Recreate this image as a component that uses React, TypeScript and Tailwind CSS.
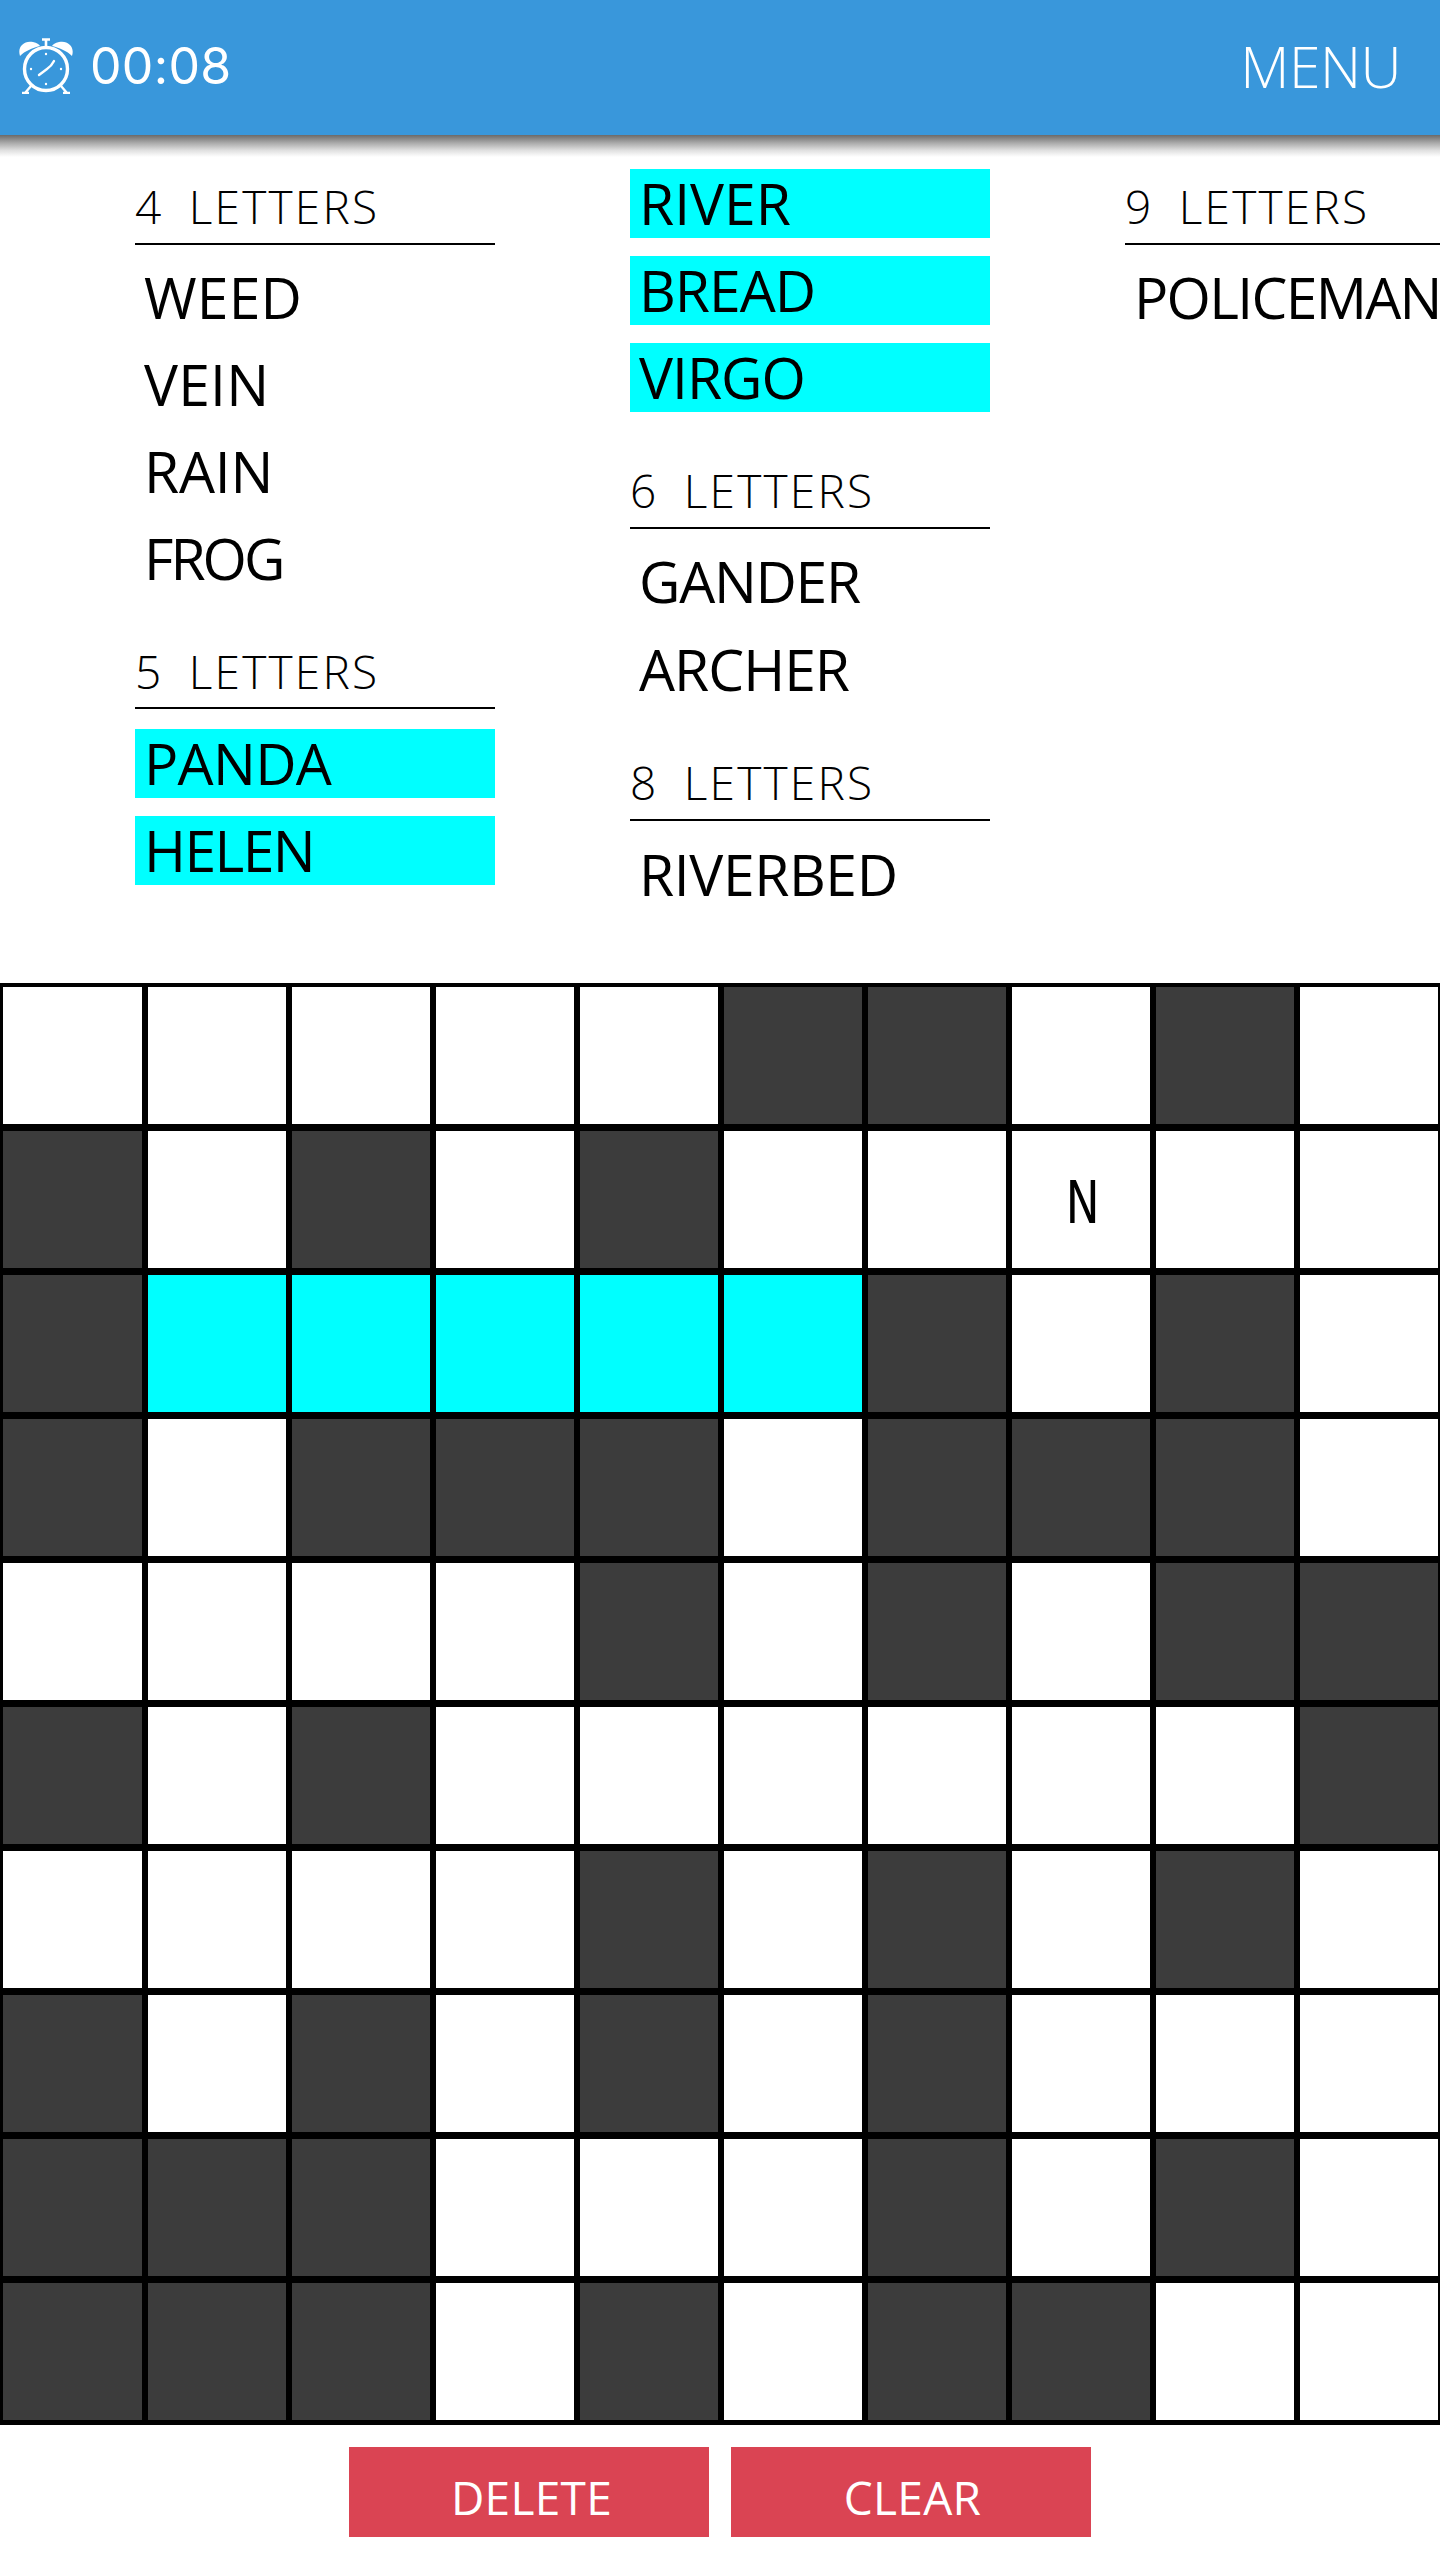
const D = "D", W = "W", C = "C", N = "N";
const rows = [
  [W, W, W, W, W, D, D, W, D, W],
  [D, W, D, W, D, W, W, N, W, W],
  [D, C, C, C, C, C, D, W, D, W],
  [D, W, D, D, D, W, D, D, D, W],
  [W, W, W, W, D, W, D, W, D, D],
  [D, W, D, W, W, W, W, W, W, D],
  [W, W, W, W, D, W, D, W, D, W],
  [D, W, D, W, D, W, D, W, W, W],
  [D, D, D, W, W, W, D, W, D, W],
  [D, D, D, W, D, W, D, D, W, W],
];

function Heading({ n, tall, low }: { n: number; tall?: boolean; low?: boolean }) {
  return (
    <div className={(tall ? "h-[99px]" : "h-[98px]") + " mb-[18px] flex items-end border-b-2 border-black"}>
      <span className={"font-['Open_Sans',sans-serif] font-light text-[46px] leading-[46px] text-black tracking-[2.2px] [word-spacing:-1.5px] whitespace-pre " + (low ? "mb-[13px]" : "mb-[14px]")}>
        {n}  LETTERS
      </span>
    </div>
  );
}

function Word({ text, hit, ls = "tracking-[-1px]" }: { text: string; hit?: boolean; ls?: string }) {
  return (
    <div className={"h-[69px] mb-[18px] pl-[9px] flex items-center whitespace-nowrap font-['Open_Sans',sans-serif] text-[57px] leading-none text-black " + ls + (hit ? " bg-[#00ffff]" : "")}>
      {text}
    </div>
  );
}

function Alarm() {
  return (
    <svg width="56" height="56" viewBox="0 0 56 56" className="text-white mb-[4px]" fill="none" stroke="currentColor">
      <circle cx="28" cy="31" r="21.5" strokeWidth="3.4" />
      <path d="M2 18 C-1 9 6 2 15 4 C19 5 21 6 22 8 C14 10 7 13 2 18 Z" fill="currentColor" stroke="none" />
      <path d="M54 18 C57 9 50 2 41 4 C37 5 35 6 34 8 C42 10 49 13 54 18 Z" fill="currentColor" stroke="none" />
      <path d="M28 8 V2 M24 1.5 H32" strokeWidth="2.6" />
      <path d="M13 48 L7 55 M43 48 L49 55 M4 55 H11 M45 55 H52" strokeWidth="2.4" />
      <path d="M21 37 L29 31 C32 29 34 27 36 23" strokeWidth="2.4" strokeLinecap="round" />
      <circle cx="28" cy="16" r="1.2" fill="currentColor" stroke="none" />
      <circle cx="28" cy="46" r="1.2" fill="currentColor" stroke="none" />
      <circle cx="13" cy="31" r="1.2" fill="currentColor" stroke="none" />
      <circle cx="43" cy="31" r="1.2" fill="currentColor" stroke="none" />
    </svg>
  );
}

export default function App() {
  return (
    <div className="relative w-[1440px] h-[2560px] bg-white overflow-hidden">
      <header className="relative h-[135px] bg-[#3997db] flex items-center justify-between pl-[18px] pr-[39px]">
        <div className="flex items-center gap-[16px]">
          <Alarm />
          <span className="font-['Inter',sans-serif] font-normal text-[50px] leading-none text-white tracking-[0.3px] mb-[3px]">00:08</span>
        </div>
        <span className="font-['Open_Sans',sans-serif] font-light text-[57px] leading-none text-white tracking-[-0.5px] mb-[3px]">MENU</span>
        <div className="absolute left-0 right-0 top-full h-[22px] bg-[linear-gradient(to_bottom,#6a6a6a,#a8a8a8_35%,#e0e0e0_70%,#ffffff)]" />
      </header>

      <div className="h-[848px] flex gap-[135px] pl-[135px]">
        <div className="w-[360px] shrink-0 pt-[12px]">
          <Heading n={4} />
          <Word text="WEED" ls="tracking-[0.2px]" />
          <Word text="VEIN" ls="tracking-[0.2px]" />
          <Word text="RAIN" ls="tracking-[-0.2px]" />
          <Word text="FROG" ls="tracking-[-3px]" />
          <Heading n={5} low />
          <div className="h-[2px]" />
          <Word text="PANDA" hit ls="tracking-[-0.7px]" />
          <Word text="HELEN" hit ls="tracking-[-1.6px]" />
        </div>
        <div className="w-[360px] shrink-0 pt-[34px]">
          <Word text="RIVER" hit ls="tracking-[0px]" />
          <Word text="BREAD" hit />
          <Word text="VIRGO" hit />
          <Heading n={6} tall />
          <Word text="GANDER" ls="tracking-[-1.3px]" />
          <div className="h-[1px]" />
          <Word text="ARCHER" />
          <Heading n={8} tall />
          <div className="h-[1px]" />
          <Word text="RIVERBED" ls="tracking-[-0.4px]" />
        </div>
        <div className="w-[360px] shrink-0 pt-[12px]">
          <Heading n={9} />
          <Word text="POLICEMAN" ls="tracking-[-1.7px]" />
        </div>
      </div>

      <div className="grid grid-cols-[145px_repeat(9,144px)] border-b-2 border-black">
        {rows.flat().map((c, i) => (
          <div
            key={i}
            className={
              "h-[144px] border-x-[3px] border-b-[3px] border-t-[4px] border-black flex items-center justify-center " +
              (c === "D" ? "bg-[#3c3c3c]" : c === "C" ? "bg-[#00ffff]" : "bg-white")
            }
          >
            {c === "N" && <span className="font-['Open_Sans',sans-serif] [font-stretch:85%] text-[60px] leading-none text-black pl-[3px]">N</span>}
          </div>
        ))}
      </div>

      <div className="mt-[22px] flex justify-center gap-[22px]">
        <button className="w-[360px] h-[90px] pt-[9px] pl-[5px] bg-[#da4453] text-white font-['Open_Sans',sans-serif] text-[46px] leading-none tracking-[0.3px]">DELETE</button>
        <button className="w-[360px] h-[90px] pt-[9px] pl-[3px] bg-[#da4453] text-white font-['Open_Sans',sans-serif] text-[46px] leading-none tracking-[0.3px]">CLEAR</button>
      </div>
    </div>
  );
}
